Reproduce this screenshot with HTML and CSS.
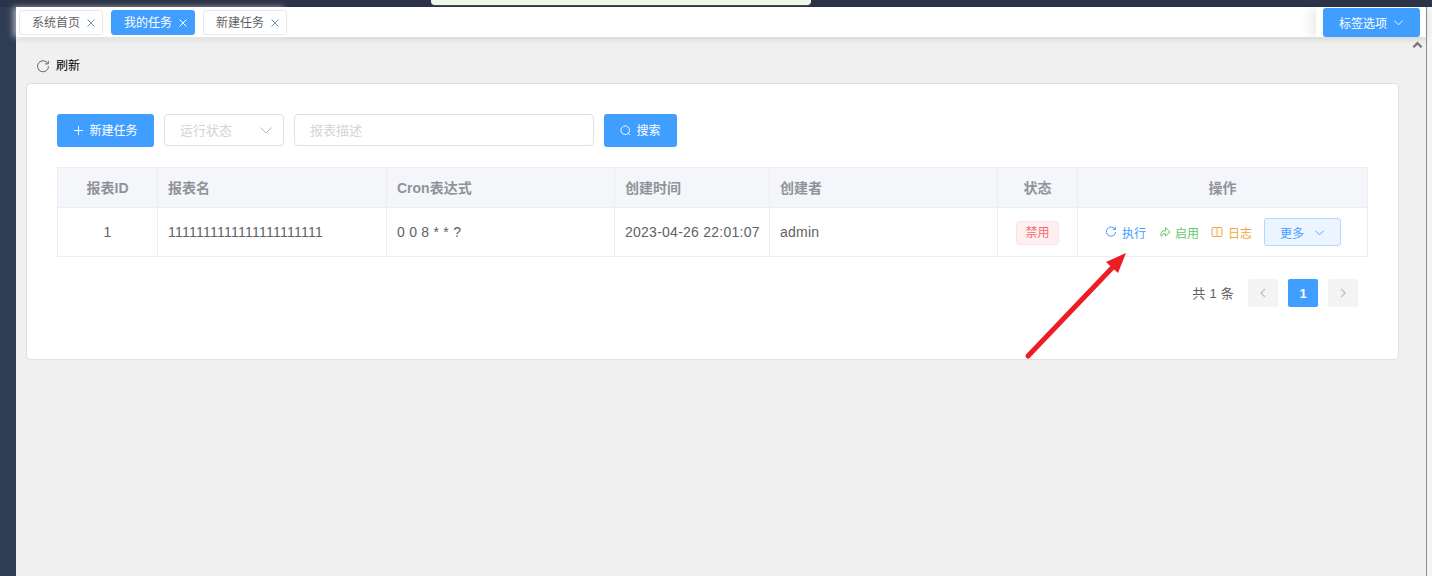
FILE: index.html
```html
<!DOCTYPE html>
<html lang="zh">
<head>
<meta charset="utf-8">
<title>我的任务</title>
<link rel="stylesheet" href="styles.css">
</head>
<body>
<div class="toast"></div>
<div class="app">
  <aside class="sidebar"></aside>
  <main class="main">
    <header class="tabsbar">
      <nav class="tabs">
        <span class="tab">系统首页<svg class="x" viewBox="0 0 10 10"><path d="M1.5 1.5l7 7M8.5 1.5l-7 7"/></svg></span>
        <span class="tab active">我的任务<svg class="x" viewBox="0 0 10 10"><path d="M1.5 1.5l7 7M8.5 1.5l-7 7"/></svg></span>
        <span class="tab">新建任务<svg class="x" viewBox="0 0 10 10"><path d="M1.5 1.5l7 7M8.5 1.5l-7 7"/></svg></span>
      </nav>
      <div class="tabopts"><button class="btn-opts">标签选项<svg class="chev" viewBox="0 0 12 12"><path d="M1.5 4l4.5 4.5L10.500 4"/></svg></button></div>
    </header>
    <section class="content">
      <svg class="up" viewBox="0 0 12 8"><path d="M1.500 6.500L6 2l4.500 4.500"/></svg>
      <div class="refresh"><svg class="ico-refresh" viewBox="0 0 14 14"><path d="M11.800 4.600A5.500 5.500 0 1 0 12.500 7.300"/><path d="M12.300 1.800v3.100H9.200"/></svg><span>刷新</span></div>
      <div class="card">
        <div class="toolbar">
          <button class="btn primary"><svg class="ico" viewBox="0 0 12 12"><path d="M6 1v10M1 6h10"/></svg><span class="lbl">新建任务</span></button>
          <div class="field select"><span class="lbl">运行状态</span><svg class="chev grey" viewBox="0 0 12 12"><path d="M.5 3.500L6 9l5.500-5.500"/></svg></div>
          <div class="field desc"><span class="lbl">报表描述</span></div>
          <button class="btn primary search"><svg class="ico" viewBox="0 0 12 12"><circle cx="5.700" cy="5.700" r="4.700"/><path d="M9 9l1.800 1.800"/></svg><span class="lbl">搜索</span></button>
        </div>
        <table class="table">
          <colgroup><col class="c1"><col class="c2"><col class="c3"><col class="c4"><col class="c5"><col class="c6"><col class="c7"></colgroup>
          <thead>
            <tr><th class="center">报表ID</th><th>报表名</th><th>Cron表达式</th><th>创建时间</th><th>创建者</th><th class="center">状态</th><th class="center">操作</th></tr>
          </thead>
          <tbody>
            <tr>
              <td class="center">1</td><td>1111111111111111111111</td><td>0 0 8 * * ?</td><td>2023-04-26 22:01:07</td><td>admin</td>
              <td class="center"><span class="tag">禁用</span></td>
              <td class="center">
                <div class="ops">
                  <span class="op blue"><svg class="opi" viewBox="0 0 12 12"><path d="M10 3.300A4.600 4.600 0 1 0 10.600 6"/><path d="M10.400 1v2.600H7.800"/></svg>执行</span>
                  <span class="op green"><svg class="opi shift" viewBox="0 0 12 12"><path d="M6.500 1.500L11 6 6.500 10V7.800H4L2.500 10.500 1.500 8.500 3.500 5H6.500z"/></svg>启用</span>
                  <span class="op orange"><svg class="opi" viewBox="0 0 12 12"><path d="M2 1.500h8a1 1 0 0 1 1 1v7a1 1 0 0 1-1 1H2a1 1 0 0 1-1-1v-7a1 1 0 0 1 1-1zM6 1.500v9"/></svg>日志</span>
                  <button class="more">更多<svg class="chev" viewBox="0 0 12 12"><path d="M1.500 4l4.500 4.500L10.500 4"/></svg></button>
                </div>
              </td>
            </tr>
          </tbody>
        </table>
        <div class="pager">
          <span class="total">共 1 条</span>
          <span class="pg"><svg viewBox="0 0 8 12"><path d="M6 2L2 6l4 4"/></svg></span>
          <span class="pg on">1</span>
          <span class="pg"><svg viewBox="0 0 8 12"><path d="M2 2l4 4-4 4"/></svg></span>
        </div>
        <svg class="arrow" viewBox="0 0 110 110"><path class="shaft" d="M2 105L86 17"/><path class="head" d="M100 2L80 11 92 22z"/></svg>
      </div>
    </section>
  </main>
  <aside class="edge"></aside>
</div>
</body>
</html>
```

FILE: styles.css
```css
* { box-sizing: border-box; }
html, body { margin: 0; padding: 0; height: 576px; overflow: hidden; }
body { font-family: "Liberation Sans", "Noto Sans CJK SC", sans-serif; font-size: 13px; color: #606266; background: #2d3a4f; position: relative; }
svg { display: block; fill: none; stroke: currentColor; }
button { font-family: inherit; border: 0; cursor: pointer; }

.toast { position: absolute; left: 431px; top: 0; width: 380px; height: 5px; background: #ecf8e6; border-radius: 0 0 4px 4px; box-shadow: 0 1px 1px rgba(255,255,255,.15); z-index: 5; }

.app { display: flex; height: 576px; padding-top: 7px; background: linear-gradient(#2a3347, #2a3347 7px, #2f3c52 7px); }
.sidebar { width: 16px; background: #2f3d54; flex: none; }
.main { width: 1410px; display: flex; flex-direction: column; background: #f0f0f0; flex: none; }
.edge { flex: 1; background: #f5f5f5; border-left: 1px solid #8f8f8f; }

.tabsbar { height: 30px; background: #fff; display: flex; justify-content: space-between; box-shadow: 0 2px 6px rgba(0,0,0,.12); position: relative; z-index: 2; flex: none; }
.tabs { display: flex; gap: 8px; padding: 3px 0 0 3px; align-items: flex-start; box-shadow: -3px 0 6px rgba(255,255,255,.55); }
.tab { height: 25px; display: flex; align-items: center; padding: 0 6px 2px 12px; gap: 6px; font-size: 12px; color: #5f6266; background: #fff; border: 1px solid #e6e8eb; border-radius: 3px; }
.tab.active { background: #409eff; border-color: #409eff; color: #fff; }
.x { width: 10px; height: 10px; stroke: #6d93b5; stroke-width: 1; margin-top: 2px; }
.tab.active .x { stroke: #fff; }

.tabopts { display: flex; padding: 1px 6px 0 7px; height: 30px; background: #fff; box-shadow: -4px 0 14px rgba(0,0,0,.1); clip-path: inset(0 0 0 -40px); }
.btn-opts { width: 97px; height: 29px; background: #409eff; color: #fff; font-size: 12px; border-radius: 3px; display: flex; align-items: center; justify-content: center; gap: 6px; padding-bottom: 1px; }
.chev { width: 11px; height: 11px; stroke-width: 1; }
.chev.grey { width: 12px; height: 12px; stroke: #b5b8bf; }

.content { flex: 1; padding: 0 10px 0 10px; position: relative; }
.up { position: absolute; right: 3px; top: 4px; width: 11px; height: 8px; stroke: #777; stroke-width: 2.500; }
.refresh { display: flex; align-items: center; gap: 6px; height: 46px; padding: 9px 0 0 10px; font-size: 12px; color: #000; }
.ico-refresh { width: 14px; height: 14px; stroke: #666; stroke-width: 1; margin-top: 2px; }

.card { position: relative; height: 277px; margin-right: 17px; background: #fff; border: 1px solid #e0e0e0; border-radius: 5px; padding: 30px 30px 0; }
.toolbar { display: flex; gap: 10px; height: 33px; }
.btn { height: 33px; border-radius: 3px; font-size: 12px; display: flex; align-items: center; justify-content: center; gap: 5px; }
.btn.primary { background: #409eff; color: #fff; width: 97px; }
.btn.search { width: 73px; }
.lbl { display: block; margin-top: -2px; }
.ico { width: 11px; height: 11px; stroke-width: 1; }
.field { height: 32px; border: 1px solid #dcdfe6; border-radius: 4px; font-size: 13px; color: #d2d4d9; display: flex; align-items: center; justify-content: space-between; padding: 0 11px 0 15px; background: #fff; }
.field.select { width: 120px; }
.field.desc { width: 300px; }

.table { width: 1310px; margin-top: 20px; border-collapse: collapse; table-layout: fixed; font-size: 14px; letter-spacing: .25px; }
.c1 { width: 100px; } .c2 { width: 229px; } .c3 { width: 228px; } .c4 { width: 155px; } .c5 { width: 228px; } .c6 { width: 80px; } .c7 { width: 290px; }
.table th, .table td { border: 1px solid #ebeef5; padding: 0 10px; text-align: left; white-space: nowrap; }
.table th { height: 40px; background: #f5f6fa; color: #909399; font-weight: 700; padding-bottom: 2px; letter-spacing: 0; }
.table td { height: 49px; color: #606266; }
.table .center { text-align: center; }
.tag { display: inline-block; height: 24px; line-height: 22px; margin-top: 1px; padding: 0 8px; font-size: 12px; color: #f56c6c; background: #fef0f0; border: 1px solid #fde2e2; border-radius: 4px; letter-spacing: 0; vertical-align: middle; }
.ops { display: flex; align-items: center; justify-content: flex-start; padding-left: 17px; gap: 12px; font-size: 12px; letter-spacing: 0; }
.op { display: flex; align-items: center; gap: 5px; }
.opi { width: 12px; height: 12px; stroke-width: 1; }
.shift { margin-left: 1px; margin-right: -1px; }
.blue { color: #409eff; } .green { color: #62c96a; } .orange { color: #f2a73b; }
.more { width: 77px; height: 28px; margin-left: 0; background: #ecf5ff; border: 1px solid #b3d8ff; border-radius: 3px; color: #409eff; font-size: 12px; display: flex; align-items: center; justify-content: center; gap: 10px; }

.pager { display: flex; justify-content: flex-end; align-items: center; gap: 10px; padding-right: 10px; margin-top: 22px; height: 28px; font-size: 13px; }
.total { margin-right: 4px; margin-top: -2px; letter-spacing: .25px; }
.pg { width: 30px; height: 28px; background: #f4f4f5; color: #c0c4cc; border-radius: 2px; display: flex; align-items: center; justify-content: center; font-weight: 700; }
.pg svg { width: 8px; height: 12px; stroke-width: 1.500; }
.pg.on { background: #409eff; color: #fff; }

.arrow { position: absolute; left: 999px; top: 167px; width: 110px; height: 110px; overflow: visible; }
.shaft { stroke: #ee1c25; stroke-width: 5; stroke-linecap: round; }
.head { fill: #ee1c25; stroke: none; }
```
